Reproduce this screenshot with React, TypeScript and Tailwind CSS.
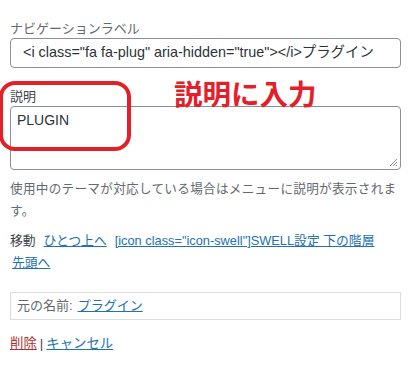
import React from 'react';

const font = { fontFamily: '"Liberation Sans", "Noto Sans CJK JP", sans-serif' };

export default function App() {
  return (
    <div
      className="relative w-[412px] h-[368px] bg-white pl-[10px] pr-[11px] pt-[21px] text-[#3c434a] overflow-hidden"
      style={font}
    >
      {/* Navigation label */}
      <label className="block text-[13px] leading-[16px] text-[#646970]">ナビゲーションラベル</label>
      <div className="mt-[1px] h-[30px] rounded-[4px] border border-[#8c8f94] px-[12px] flex items-center text-[14.4px] text-[#2c3338] whitespace-nowrap overflow-hidden">
        {'<i class="fa fa-plug" aria-hidden="true"></i>プラグイン'}
      </div>

      {/* Description */}
      <label className="block mt-[21px] text-[13px] leading-[16px] text-[#3c434a]">説明</label>
      <div className="relative mt-[1px] h-[64px] rounded-[4px] border border-[#8c8f94] px-[6px] pt-[3px] text-[14px] leading-[20px] text-[#2c3338]">
        PLUGIN
        <svg className="absolute right-[2px] bottom-[2px]" width="9" height="9" viewBox="0 0 9 9">
          <path d="M8 1 L1 8 M8 4 L4 8 M8 7 L7 8" stroke="#8c8f94" strokeWidth="1" />
        </svg>
      </div>

      <p className="mt-[8px] mr-[-6px] text-[12.6px] tracking-[0.3px] leading-[22px] text-[#646970]">
        使用中のテーマが対応している場合はメニューに説明が表示されます。
      </p>

      {/* Move */}
      <div className="mt-[8px] text-[12.8px] leading-[22px] text-[#3c434a]">
        <span className="mr-[8px]">移動</span>
        <a className="text-[#2271b1] underline mr-[8px] whitespace-nowrap">ひとつ上へ</a>
        <a className="text-[#2271b1] underline mr-[8px] whitespace-nowrap">[icon class="icon-swell"]SWELL設定 下の階層</a>
        <a className="text-[#2271b1] underline ml-[2px] whitespace-nowrap">先頭へ</a>
      </div>

      {/* Original name */}
      <div className="mt-[18px] h-[28px] border border-[#dcdcde] px-[6px] flex items-center text-[13px] text-[#646970]">
        <span className="mr-[5px]">元の名前:</span>
        <a className="text-[#2271b1] underline">プラグイン</a>
      </div>

      <div className="mt-[14px] text-[13.4px] leading-[20px] text-[#3c434a]">
        <a className="text-[#b32d2e] underline">削除</a>
        <span className="mx-[3px]">|</span>
        <a className="text-[#2271b1] underline">キャンセル</a>
      </div>

      {/* Annotation overlay */}
      <div className="absolute left-[-1px] top-[81px] w-[132px] h-[70px] rounded-[16px] border-[4px] border-[#e3202a]" />
      <div className="absolute left-[174px] top-[80px] text-[28.5px] leading-[30px] font-bold text-[#e3202a]">
        説明に入力
      </div>
    </div>
  );
}
